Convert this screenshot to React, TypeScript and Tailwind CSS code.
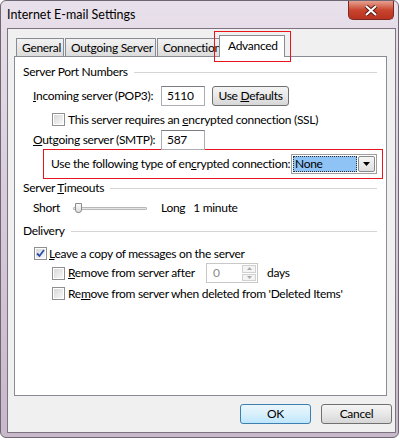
import React from "react";

const ui = "font-['Lato',sans-serif] text-[12px] tracking-[-0.3px] text-black whitespace-nowrap";

function Check({ checked = false }: { checked?: boolean }) {
  return (
    <div className="w-[13px] h-[13px] border border-[#8f8f8f] bg-white p-[1px] flex-none">
      <div className="w-full h-full bg-gradient-to-br from-[#d8d8d8] to-[#f8f8f8] flex items-center justify-center">
        {checked && (
          <svg width="9" height="9" viewBox="0 0 9 9">
            <path d="M1 4.5 L3.5 7 L8 1" stroke="#2b4fa8" strokeWidth="1.8" fill="none" />
          </svg>
        )}
      </div>
    </div>
  );
}

function GroupHeader({ children }: { children: React.ReactNode }) {
  return (
    <div className="h-[16px] flex items-center pl-[8px] pr-[9px]">
      <span className="leading-[16px]">{children}</span>
      <div className="flex-1 ml-[6px] border-t border-[#d5d5d5]" />
    </div>
  );
}

export default function App() {
  return (
    <main className={`w-[400px] h-[440px] bg-white ${ui}`}>
      <div className="w-[399px] h-[438px] rounded-[6px] border border-[#6f6674] bg-gradient-to-b from-[#e8e0ea] via-[#d6c9d8] to-[#c7b8ca]">
        {/* title bar */}
        <div className="h-[27px] flex justify-between">
          <div className="pl-[6px] pt-[5px] text-[12.5px] tracking-[0px]">Internet E-mail Settings</div>
          <div className="mr-[4px] w-[46px] h-[19px] rounded-b-[5px] border border-[#7b2a22] border-t-0 bg-gradient-to-b from-[#e4a08f] via-[#c9452f] to-[#b8321f] flex items-center justify-center">
            <svg width="14" height="11" viewBox="0 0 14 11">
              <path d="M2 1 L12 10 M12 1 L2 10" stroke="#5a1a12" strokeWidth="4" />
              <path d="M2 1 L12 10 M12 1 L2 10" stroke="#ffffff" strokeWidth="2" />
            </svg>
          </div>
        </div>

        {/* client area */}
        <div className="ml-[6px] w-[389px] h-[405px] border border-[#7d7280] bg-[#f0f0f0]">
          {/* tabs */}
          <div className="pl-[8px] flex items-end h-[27px]">
            <div className="w-[48px] h-[18px] pl-[5px] border border-b-0 border-[#898c95] bg-gradient-to-b from-[#f2f2f2] to-[#dcdcdc] flex items-center">General</div>
            <div className="w-[91px] h-[18px] ml-[1px] pl-[5px] border border-b-0 border-[#898c95] bg-gradient-to-b from-[#f2f2f2] to-[#dcdcdc] flex items-center">Outgoing Server</div>
            <div className="w-[64px] h-[18px] ml-[1px] pl-[5px] border border-b-0 border-[#898c95] bg-gradient-to-b from-[#f2f2f2] to-[#dcdcdc] flex items-center">Connection</div>
            <div className="relative w-[66px] -ml-[2px] -mb-[1px] h-[22px] pl-[8px] border border-b-0 border-[#898c95] bg-white flex items-start pt-[1px]">
              Advanced
              <div className="absolute -left-[6px] -top-[5px] w-[77px] h-[31px] border border-[#e8141c]" />
            </div>
          </div>

          {/* panel */}
          <div className="ml-[6px] w-[373px] h-[340px] border border-[#898c95] bg-white">
            <div className="h-[7px]" />
            <GroupHeader>Server Port Numbers</GroupHeader>

            <div className="mt-[6px] h-[20px] flex items-center pl-[18px]">
              <span className="w-[128px]">
                <u>I</u>ncoming server (POP3):
              </span>
              <div className="w-[44px] h-[20px] border border-[#abadb3] border-t-[#7a7c83] pl-[5px] flex items-center">5110</div>
              <div className="ml-[7px] w-[77px] h-[20px] rounded-[3px] border border-[#707070] bg-gradient-to-b from-[#f4f4f4] via-[#e8e8e8] to-[#d6d6d6] flex items-center justify-center">
                Use&nbsp;<u>D</u>efaults
              </div>
            </div>

            <div className="mt-[7px] h-[13px] flex items-center pl-[37px]">
              <Check />
              <span className="ml-[3px]">This server requires an <u>e</u>ncrypted connection (SSL)</span>
            </div>

            <div className="mt-[4px] h-[20px] flex items-center pl-[18px]">
              <span className="w-[128px]">
                <u>O</u>utgoing server (SMTP):
              </span>
              <div className="w-[44px] h-[20px] border border-[#abadb3] border-t-[#7a7c83] pl-[5px] flex items-center">587</div>
            </div>

            <div className="-mt-[1px] ml-[28px] w-[340px] h-[30px] border border-[#e8141c] flex items-center pl-[7px] pr-[5px]">
              <span className="flex-1">Use the following type of en<u>c</u>rypted connection:</span>
              <div className="w-[86px] h-[20px] border border-[#a0a0a0] flex items-center p-[1px]">
                <div className="flex-1 h-full bg-[#8fc3f5] border border-dotted border-[#333] flex items-center pl-[1px] leading-none">None</div>
                <div className="ml-[1px] w-[17px] h-full border border-[#8a8a8a] rounded-[2px] bg-gradient-to-b from-[#f6f6f6] to-[#dedede] flex items-center justify-center">
                  <svg width="7" height="4" viewBox="0 0 7 4"><path d="M0 0 H7 L3.5 4 Z" fill="#000" /></svg>
                </div>
              </div>
            </div>

            <div className="mt-[1px]" />
            <GroupHeader>
              Server <u>T</u>imeouts
            </GroupHeader>

            <div className="mt-[4px] h-[16px] flex items-center pl-[18px]">
              <span className="w-[40px]">Short</span>
              <div className="relative w-[74px] h-[3px] border border-[#b8b8b8] bg-[#e6e6e6] rounded-[1px]">
                <div className="absolute left-[1px] -top-[5px] w-[7px] h-[10px] border border-[#8c8c8c] bg-gradient-to-b from-[#fafafa] to-[#dcdcdc] rounded-b-[3px]" />
              </div>
              <span className="ml-[14px]">Long</span>
              <span className="ml-[8px]">1 minute</span>
            </div>

            <div className="mt-[7px]" />
            <GroupHeader>Delivery</GroupHeader>

            <div className="mt-[8px] h-[13px] flex items-center pl-[19px]">
              <Check checked />
              <span className="ml-[2px]">
                <u>L</u>eave a copy of messages on the server
              </span>
            </div>

            <div className="mt-[3px] h-[20px] flex items-center pl-[37px]">
              <Check />
              <span className="ml-[3px] w-[138px]">
                <u>R</u>emove from server after
              </span>
              <div className="w-[52px] h-[20px] border border-[#c8c8c8] flex items-center">
                <span className="flex-1 pl-[6px] text-[#8a8a8a]">0</span>
                <div className="w-[16px] h-full flex flex-col p-[1px] gap-[1px]">
                  <div className="flex-1 border border-[#d0d0d0] bg-[#f4f4f4] flex items-center justify-center">
                    <svg width="5" height="3" viewBox="0 0 5 3"><path d="M0 3 H5 L2.5 0 Z" fill="#a8a8a8" /></svg>
                  </div>
                  <div className="flex-1 border border-[#d0d0d0] bg-[#f4f4f4] flex items-center justify-center">
                    <svg width="5" height="3" viewBox="0 0 5 3"><path d="M0 0 H5 L2.5 3 Z" fill="#a8a8a8" /></svg>
                  </div>
                </div>
              </div>
              <span className="ml-[9px]">days</span>
            </div>

            <div className="mt-[4px] h-[13px] flex items-center pl-[37px]">
              <Check />
              <span className="ml-[3px]">
                Re<u>m</u>ove from server when deleted from 'Deleted Items'
              </span>
            </div>
          </div>

          {/* buttons */}
          <div className="mt-[8px] flex justify-end pr-[3px] gap-[10px]">
            <div className="w-[71px] h-[20px] rounded-[3px] border border-[#3c7fb1] bg-gradient-to-b from-[#eaf6fd] via-[#d9f0fc] to-[#bee6fd] flex items-center justify-center">OK</div>
            <div className="w-[71px] h-[20px] rounded-[3px] border border-[#707070] bg-gradient-to-b from-[#f4f4f4] via-[#e8e8e8] to-[#d6d6d6] flex items-center justify-center">Cancel</div>
          </div>
        </div>
      </div>
    </main>
  );
}
